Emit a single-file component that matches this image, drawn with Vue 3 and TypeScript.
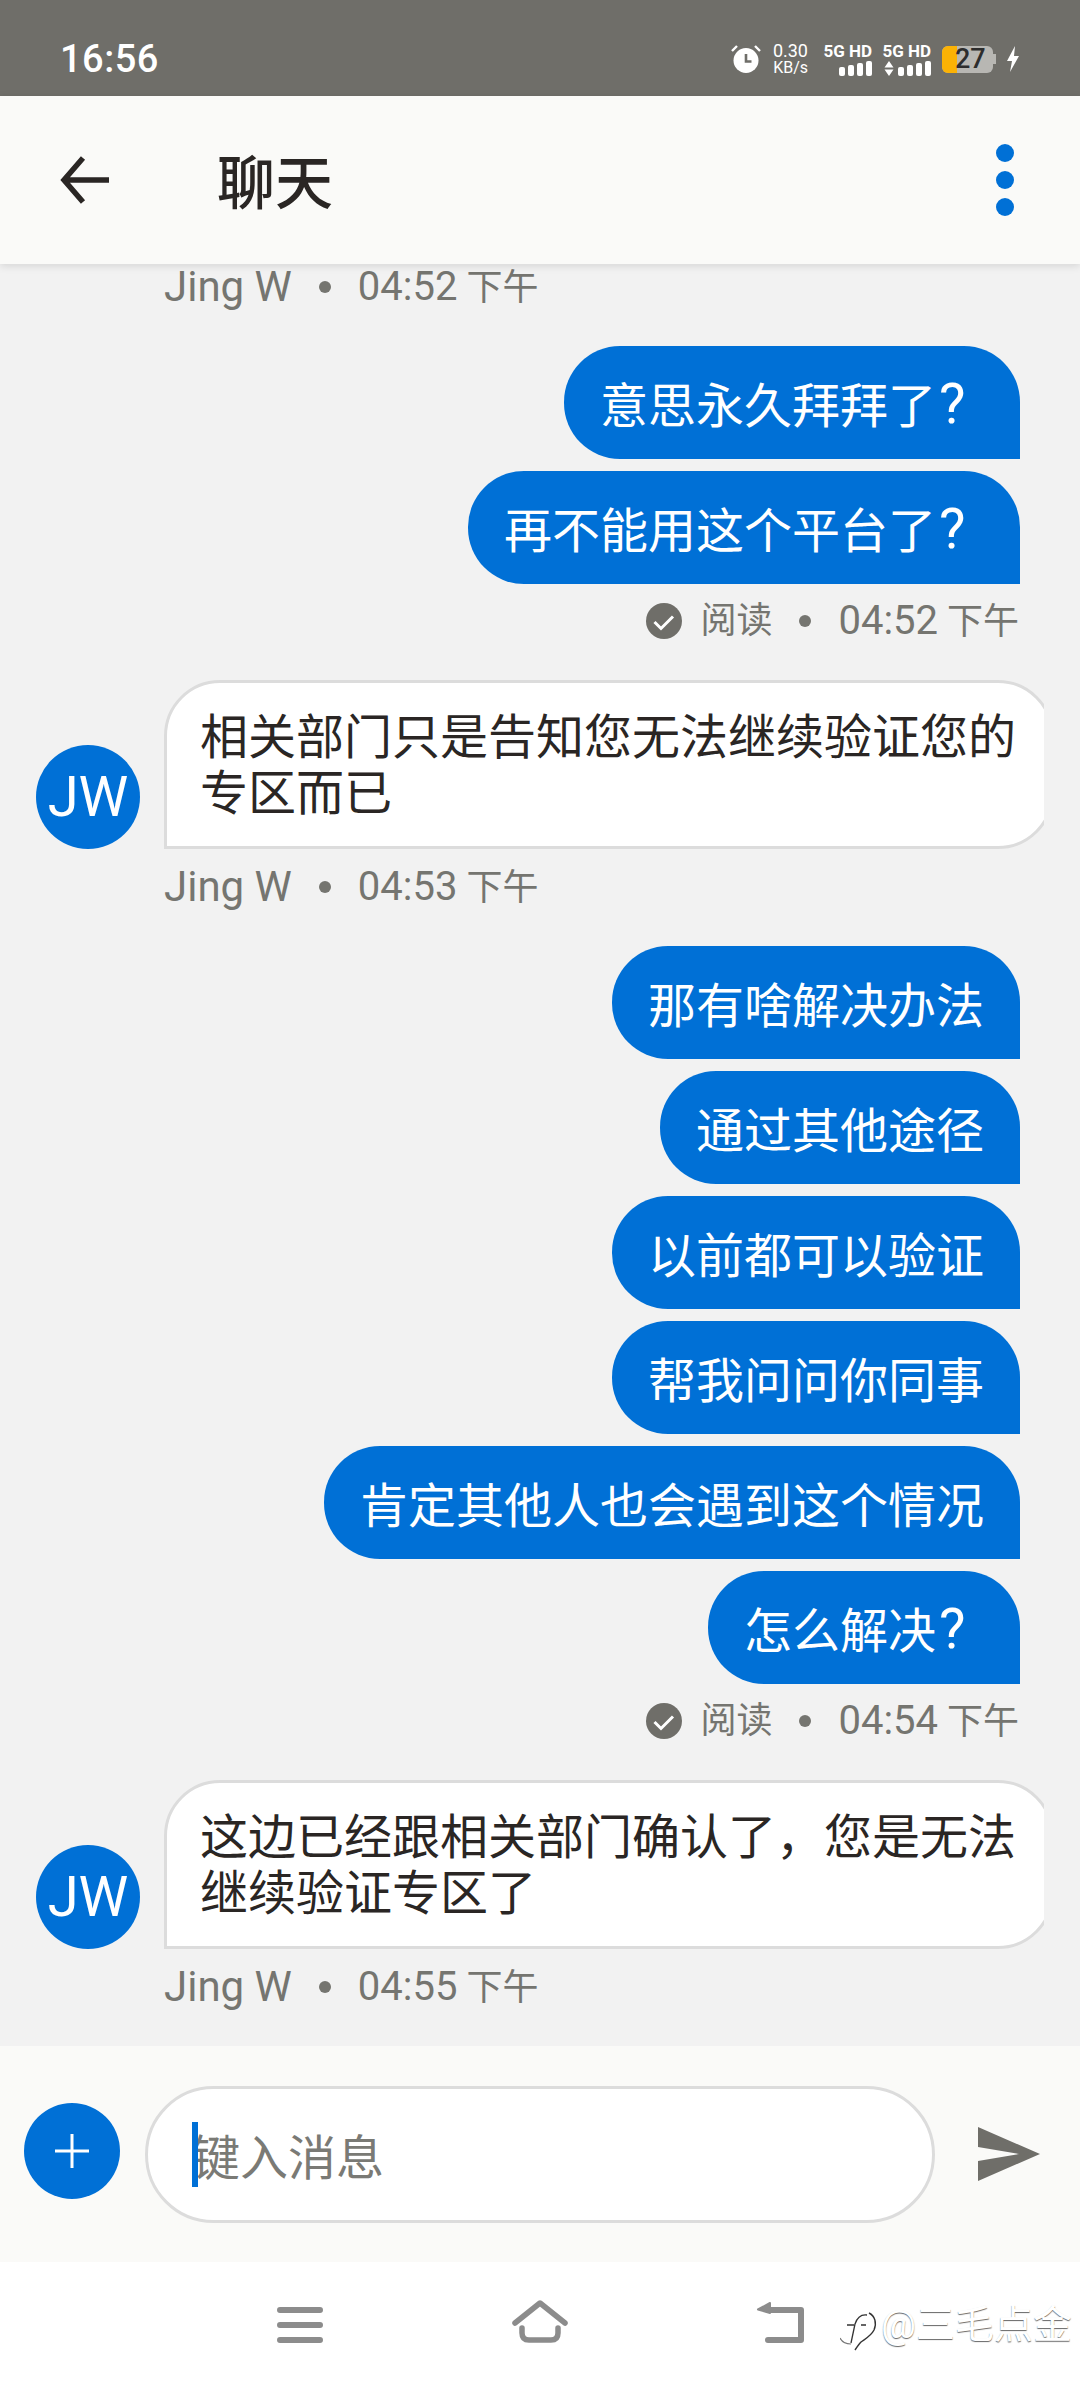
<script setup lang="ts">
type Block = {
  kind: 'sent' | 'recv'
  lines: string[]
  time: string
}

const blocks: Block[] = [
  {
    kind: 'sent',
    lines: ['意思永久拜拜了？', '再不能用这个平台了？'],
    time: '04:52'
  },
  {
    kind: 'recv',
    lines: ['相关部门只是告知您无法继续验证您的', '专区而已'],
    time: '04:53'
  },
  {
    kind: 'sent',
    lines: ['那有啥解决办法', '通过其他途径', '以前都可以验证', '帮我问问你同事', '肯定其他人也会遇到这个情况', '怎么解决？'],
    time: '04:54'
  },
  {
    kind: 'recv',
    lines: ['这边已经跟相关部门确认了，您是无法', '继续验证专区了'],
    time: '04:55'
  }
]

const barHeights = [9, 11, 13, 15]

const body = (line: string) => line.replace('？', '')
const asks = (line: string) => line.endsWith('？')
</script>

<template>
  <div class="page">
    <div class="status-bar">
      <span class="clock">16:56</span>
      <div class="status-icons">
        <svg class="alarm" width="30" height="28" viewBox="0 0 30 28">
          <circle cx="15" cy="15.5" r="12.5" fill="#fff" />
          <path d="M15 9v7.5h5.5" fill="none" stroke="#6f6e69" stroke-width="2.6" />
          <path d="M1 6l5-5M29 6l-5-5" stroke="#fff" stroke-width="2.4" />
        </svg>
        <div class="speed"><span>0.30</span><span class="unit">KB/s</span></div>
        <div class="signal">
          <span class="net">5G HD</span>
          <div class="bars">
            <i v-for="h in barHeights" :key="h" :style="{ height: h + 'px' }" />
          </div>
        </div>
        <div class="signal">
          <span class="net">5G HD</span>
          <div class="bars">
            <svg width="10" height="15" viewBox="0 0 10 15"><path d="M5 0l4.5 6.5H.5zM5 15l4.5-6.5H.5z" fill="#fff" /></svg>
            <i v-for="h in barHeights" :key="h" :style="{ height: h + 'px' }" />
          </div>
        </div>
        <div class="battery"><span class="level" /><span class="pct">27</span><span class="nub" /></div>
        <svg width="14" height="26" viewBox="0 0 14 26"><path d="M9 0L1 15h5l-2 11 9-16H8z" fill="#fff" /></svg>
      </div>
    </div>

    <header class="top-bar">
      <svg class="back" width="50" height="48" viewBox="0 0 50 48">
        <path d="M49 24H5M23 2L4 24l19 22" fill="none" stroke="#2a2624" stroke-width="5.5" />
      </svg>
      <h1>聊天</h1>
      <div class="dots"><span /><span /><span /></div>
    </header>

    <main class="messages">
      <div class="meta recv-meta first">
        <span class="name">Jing W</span><b /><span class="time">04:52 <span class="cn">下午</span></span>
      </div>

      <template v-for="(block, i) in blocks" :key="i">
        <section v-if="block.kind === 'sent'" class="sent-group">
          <div v-for="line in block.lines" :key="line" class="bubble-out">
            {{ body(line) }}<span v-if="asks(line)" class="ask">?</span>
          </div>
          <div class="meta sent-meta">
            <svg width="36" height="36" viewBox="0 0 36 36">
              <circle cx="18" cy="18" r="18" fill="#6f6e69" />
              <path d="M8.5 19l6.5 6.5L27 13.5" fill="none" stroke="#fff" stroke-width="3" />
            </svg>
            <span class="read">阅读</span><b /><span class="time">{{ block.time }} <span class="cn">下午</span></span>
          </div>
        </section>

        <section v-else class="recv-group">
          <div class="recv-row">
            <div class="avatar">JW</div>
            <div class="bubble-clip">
              <div class="bubble-in">
                <div v-for="line in block.lines" :key="line">{{ line }}</div>
              </div>
            </div>
          </div>
          <div class="meta recv-meta">
            <span class="name">Jing W</span><b /><span class="time">{{ block.time }} <span class="cn">下午</span></span>
          </div>
        </section>
      </template>
    </main>

    <div class="composer">
      <button class="plus">
        <svg width="34" height="34" viewBox="0 0 34 34"><path d="M17 0v34M0 17h34" stroke="#fff" stroke-width="3" /></svg>
      </button>
      <div class="input">
        <span class="caret" />
        <span class="placeholder">键入消息</span>
      </div>
      <svg class="send" width="62" height="54" viewBox="0 0 62 54">
        <path d="M0 0l62 27L0 54V34l41-7L0 20z" fill="#6f6e69" />
      </svg>
    </div>

    <nav class="nav-bar">
      <svg class="nav-menu" width="46" height="36" viewBox="0 0 46 36">
        <path d="M3 3h40M3 18h40M3 33h40" stroke="#8c8c8c" stroke-width="6" stroke-linecap="round" />
      </svg>
      <svg class="nav-home" width="58" height="44" viewBox="0 0 58 44">
        <path d="M4 23L29 3l25 20M11 28v5q0 7 7 7h22q7 0 7-7v-5" fill="none" stroke="#8c8c8c" stroke-width="5.5" stroke-linecap="round" stroke-linejoin="round" />
      </svg>
      <svg class="nav-back" width="50" height="44" viewBox="0 0 50 44">
        <path d="M13 9h33v30H13" fill="none" stroke="#8c8c8c" stroke-width="6" stroke-linecap="round" stroke-linejoin="round" />
        <path d="M15 2L3 8.5 15 12z" fill="#8c8c8c" stroke="#8c8c8c" stroke-width="2" stroke-linejoin="round" />
      </svg>
      <div class="watermark">
        <svg width="37" height="40" viewBox="0 0 37 40">
          <path d="M29 1c6 3 8 10 5 17-3 6-9 9-13 12-2 2-4 5-6 8" fill="none" stroke="#333" stroke-width="1.4" />
          <path d="M0 26c2 4 6 6 11 6" fill="none" stroke="#777" stroke-width="1.2" />
          <path d="M27 3c-7-1-10 3-12 9l-4 19M7 13h7M21 13h5" fill="none" stroke="#333" stroke-width="1.3" />
        </svg>
        <span>@三毛点金</span>
      </div>
    </nav>
  </div>
</template>

<style>
html,
body {
  margin: 0;
  background: #f2f2f2;
}
</style>

<style scoped>
.page {
  width: 1080px;
  height: 2388px;
  display: flex;
  flex-direction: column;
  overflow: hidden;
  font-family: Roboto, "Noto Sans CJK SC", sans-serif;
  background: #f2f2f2;
}

.status-bar {
  height: 96px;
  flex: none;
  background: #6f6e69;
  color: #fff;
  display: flex;
  justify-content: space-between;
  align-items: center;
  padding: 22px 60px 0 60px;
  box-sizing: border-box;
}

.clock {
  font-size: 38px;
  font-weight: 500;
  letter-spacing: 0.5px;
}

.status-icons {
  display: flex;
  align-items: center;
}

.alarm {
  margin-right: 12px;
}

.speed {
  display: flex;
  flex-direction: column;
  align-items: flex-end;
  font-size: 18px;
  line-height: 17px;
  margin-right: 16px;
}

.speed .unit {
  font-size: 16px;
}

.signal {
  display: flex;
  flex-direction: column;
  align-items: flex-end;
  margin-right: 11px;
  width: 48px;
}

.net {
  font-size: 17px;
  font-weight: 700;
  line-height: 17px;
  white-space: nowrap;
}

.bars {
  display: flex;
  align-items: flex-end;
  gap: 3px;
  height: 16px;
}

.bars svg {
  margin-right: 1px;
}

.bars i {
  display: block;
  width: 6px;
  background: #fff;
  border-radius: 2px;
}

.battery {
  position: relative;
  width: 51px;
  height: 27px;
  border-radius: 6px;
  background: #b8b7b3;
  margin-right: 13px;
}

.battery .level {
  position: absolute;
  left: 0;
  top: 0;
  bottom: 0;
  width: 15px;
  background: #fbb205;
  border-radius: 6px 0 0 6px;
}

.battery .pct {
  position: absolute;
  left: 13px;
  top: 0;
  font-size: 27px;
  line-height: 27px;
  font-weight: 500;
  color: #2d2d2d;
}

.battery .nub {
  position: absolute;
  right: -3px;
  top: 8px;
  width: 3px;
  height: 10px;
  background: #b8b7b3;
}

.top-bar {
  position: relative;
  z-index: 1;
  height: 168px;
  flex: none;
  background: #fafaf8;
  box-shadow: 0 2px 8px rgba(0, 0, 0, 0.12);
  display: flex;
  align-items: center;
  padding: 0 66px 0 60px;
  box-sizing: border-box;
}

.back {
  flex: none;
}

.top-bar h1 {
  margin: -3px 0 0 107px;
  font-size: 58px;
  font-weight: 500;
  color: #2a2624;
  flex: 1;
}

.dots {
  display: flex;
  flex-direction: column;
  gap: 9px;
}

.dots span {
  width: 18px;
  height: 18px;
  border-radius: 50%;
  background: #0070d6;
}

.messages {
  flex: 1;
  min-height: 0;
}

.meta {
  display: flex;
  align-items: center;
  height: 44px;
  line-height: 44px;
  color: #757570;
}

.meta b {
  width: 12px;
  height: 12px;
  border-radius: 50%;
  background: #757570;
  margin: 0 27px;
}

.name {
  font-size: 42px;
}

.time {
  font-size: 40px;
  white-space: nowrap;
}

.cn,
.read {
  font-size: 36px;
}

.cn {
  margin-left: -1px;
}

.recv-meta {
  margin: 16px 0 0 164px;
}

.recv-meta.first {
  margin-top: 0;
  padding-top: 1px;
}

.sent-group {
  display: flex;
  flex-direction: column;
  align-items: flex-end;
  gap: 12px;
  padding: 37px 60px 0 0;
}

.bubble-out {
  height: 113px;
  box-sizing: border-box;
  padding: 8px 36px 0 36px;
  line-height: 105px;
  font-size: 48px;
  color: #fff;
  background: #0070d6;
  border-radius: 56px 56px 0 56px;
  white-space: nowrap;
}

.ask {
  display: inline-block;
  width: 48px;
  font-size: 56px;
  line-height: 1;
  font-family: Roboto, sans-serif;
  padding-left: 3px;
  box-sizing: border-box;
}

.sent-meta {
  margin-top: 3px;
  margin-right: 1px;
}

.sent-meta .read {
  margin-left: 18px;
}

.recv-group {
  padding-top: 37px;
}

.recv-row {
  display: flex;
  align-items: flex-end;
  padding-left: 36px;
  width: 1044px;
  box-sizing: border-box;
}

.avatar {
  width: 104px;
  height: 104px;
  flex: none;
  border-radius: 50%;
  background: #0070d6;
  color: #fff;
  font-size: 56px;
  line-height: 104px;
  text-align: center;
  margin-right: 24px;
}

.bubble-clip {
  flex: 1;
  overflow: hidden;
}

.bubble-in {
  width: 890px;
  box-sizing: border-box;
  padding: 27px 0 24px 33px;
  font-size: 48px;
  line-height: 56px;
  color: #2a2624;
  background: #fff;
  border: 3px solid #dcdcdc;
  border-radius: 56px 56px 56px 0;
  white-space: nowrap;
}

.composer {
  height: 216px;
  flex: none;
  background: #fafaf8;
  display: flex;
  align-items: center;
  box-sizing: border-box;
  padding: 0 40px 0 24px;
}

.plus {
  width: 96px;
  height: 96px;
  flex: none;
  border: none;
  padding: 0;
  margin-bottom: 6px;
  border-radius: 50%;
  background: #0070d6;
  display: flex;
  align-items: center;
  justify-content: center;
}

.input {
  width: 790px;
  height: 137px;
  margin: 0 43px 0 25px;
  flex: none;
  box-sizing: border-box;
  background: #fff;
  border: 3px solid #dcdcdc;
  border-radius: 69px;
  display: flex;
  align-items: center;
  padding-left: 44px;
  position: relative;
}

.caret {
  position: absolute;
  left: 44px;
  top: 33px;
  width: 6px;
  height: 65px;
  background: #0070d6;
}

.placeholder {
  font-size: 48px;
  color: #7a7a75;
}

.send {
  flex: none;
}

.nav-bar {
  height: 126px;
  flex: none;
  background: #fff;
  position: relative;
}

.nav-menu {
  position: absolute;
  left: 277px;
  top: 45px;
}

.nav-home {
  position: absolute;
  left: 511px;
  top: 38px;
}

.nav-back {
  position: absolute;
  left: 755px;
  top: 39px;
}

.watermark {
  position: absolute;
  left: 840px;
  top: 40px;
  display: flex;
  align-items: flex-start;
  gap: 4px;
  font-size: 39px;
  line-height: 46px;
  color: #fff;
  white-space: nowrap;
  text-shadow: 0 1px 1px #666;
}

.watermark svg {
  margin-top: 10px;
}
</style>
